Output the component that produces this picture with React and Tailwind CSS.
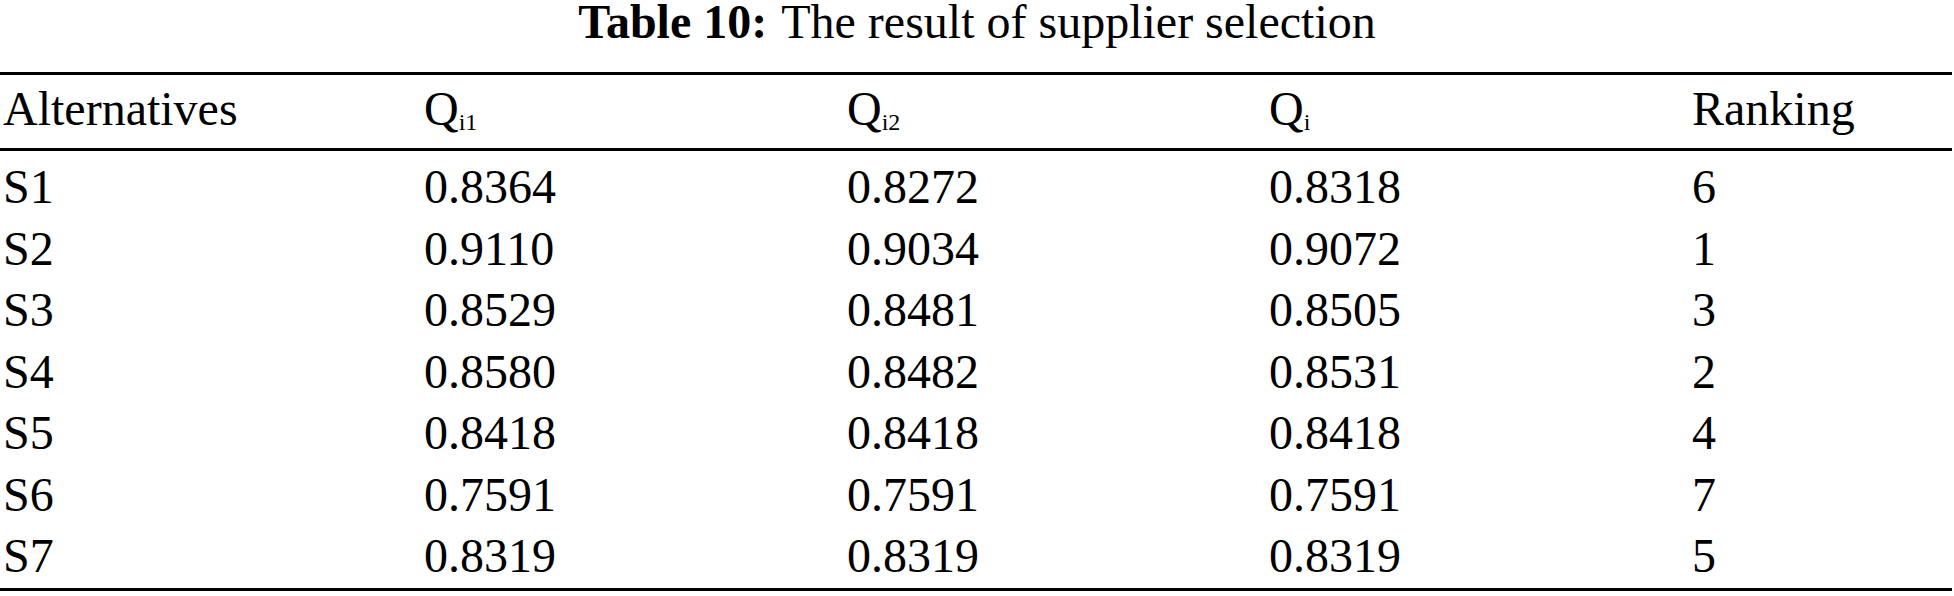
import React from "react";

const rows = [
  ["S1", "0.8364", "0.8272", "0.8318", "6"],
  ["S2", "0.9110", "0.9034", "0.9072", "1"],
  ["S3", "0.8529", "0.8481", "0.8505", "3"],
  ["S4", "0.8580", "0.8482", "0.8531", "2"],
  ["S5", "0.8418", "0.8418", "0.8418", "4"],
  ["S6", "0.7591", "0.7591", "0.7591", "7"],
  ["S7", "0.8319", "0.8319", "0.8319", "5"],
];

// Q with a small subscript
function Q({ sub }) {
  return (
    <span>
      Q<span className="text-[24px] leading-none align-[-5px]">{sub}</span>
    </span>
  );
}

const cols = "grid grid-cols-[421px_423px_422px_423px_1fr] pl-[3px]";

export default function App() {
  return (
    <div
      className="w-[1954px] h-[596px] bg-white text-black overflow-hidden"
      style={{ fontFamily: '"Liberation Serif", "Times New Roman", serif' }}
    >
      {/* caption */}
      <div className="h-[72px] pt-[1px] text-center text-[48px] leading-[42px]">
        <span className="font-bold">Table 10:</span>
        <span className="ml-[14px]">The result of supplier selection</span>
      </div>

      <div className="w-[1952px] border-t-[3px] border-b-[3px] border-black text-[48px]">
        {/* header */}
        <div className={`${cols} pt-[3px] pb-[8px] leading-[62px] border-b-[3px] border-black`}>
          <div>Alternatives</div>
          <div>
            <Q sub="i1" />
          </div>
          <div>
            <Q sub="i2" />
          </div>
          <div>
            <Q sub="i" />
          </div>
          <div>Ranking</div>
        </div>

        {/* body */}
        <div className="pt-[5px] pb-[1.5px]">
          {rows.map((r) => (
            <div key={r[0]} className={`${cols} leading-[61.5px]`}>
              {r.map((c, i) => (
                <div key={i}>{c}</div>
              ))}
            </div>
          ))}
        </div>
      </div>
    </div>
  );
}
